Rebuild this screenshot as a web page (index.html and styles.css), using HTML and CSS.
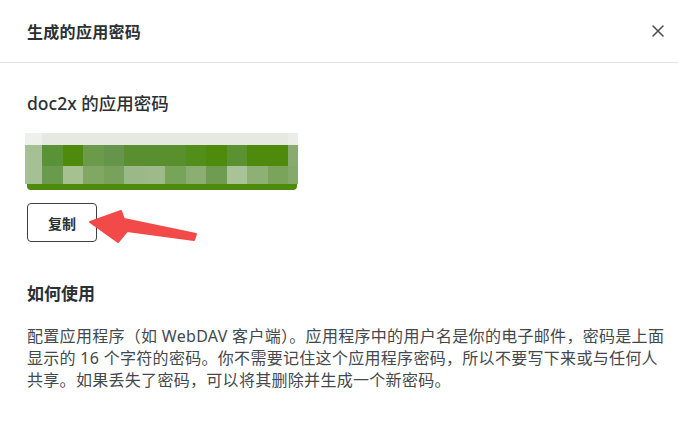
FILE: index.html
```html
<!DOCTYPE html>
<html lang="zh-CN">
<head>
  <meta charset="UTF-8">
  <meta name="viewport" content="width=device-width, initial-scale=1.0">
  <title>生成的应用密码</title>
  <link rel="stylesheet" href="styles.css">
</head>
<body>

<div class="dialog">
  <div class="dialog-header">
    <h1>生成的应用密码</h1>
    <button class="close-btn" aria-label="关闭">
      <svg width="14" height="14" viewBox="0 0 14 14"><path d="M2 2 L12 12 M12 2 L2 12" stroke="#4a4f55" stroke-width="1.6" stroke-linecap="round"/></svg>
    </button>
  </div>

  <div class="dialog-body">
    <h2 class="app-name">doc2x 的应用密码</h2>

    <!-- 密码已打码，只显示色块 -->
    <div class="password-box">
      <div class="mosaic" id="mosaic"></div>
      <div class="password-bar"></div>
    </div>

    <div class="copy-row">
      <button class="copy-btn">复制</button>
      <svg class="pointer" width="112" height="38" viewBox="0 0 112 38">
        <polygon points="2,15 33,4 36,12 108,27 106,33 39,24 30,35" fill="#f24a49" stroke="#f24a49" stroke-width="2" stroke-linejoin="round"/>
      </svg>
    </div>

    <h3 class="section-title">如何使用</h3>
    <p class="help-text">配置应用程序（如 WebDAV 客户端）。应用程序中的用户名是你的电子邮件，密码是上面显示的 16 个字符的密码。你不需要记住这个应用程序密码，所以不要写下来或与任何人共享。如果丢失了密码，可以将其删除并生成一个新密码。</p>
  </div>
</div>

<script>
  // 每行 14 格：首格窄、末格窄
  const rows = [
    ["#eef0ec","#e5e9e2","#e5e9e2","#e5e9e2","#e5e9e2","#e5e9e2","#e5e9e2","#e5e9e2","#e5e9e2","#e5e9e2","#e5e9e2","#e5e9e2","#e5e9e2","#eaede8"],
    ["#a6c096","#5a9236","#4e8a0c","#6a9a4a","#65954a","#5a8f30","#5a8f30","#5a8f2e","#528e1a","#4e8a0c","#5a9232","#4e8a0c","#4e8a0c","#8aab70"],
    ["#a6c096","#6a9a4d","#a6c090","#80a864","#78a25c","#9bb888","#9fba8a","#78a45a","#8cae72","#6e9c50","#a9c398","#8eb075","#7aa45c","#86a96a"]
  ];
  const mosaic = document.getElementById("mosaic");
  rows.forEach(row => {
    row.forEach(color => {
      let cell = document.createElement("span");
      cell.style.background = color;
      mosaic.appendChild(cell);
    });
  });
</script>

</body>
</html>
```

FILE: styles.css
```css
body {
  margin: 0;
  background: #ffffff;
  font-family: "Noto Sans", "Noto Sans CJK SC", sans-serif;
  color: #2b3035;
}
.dialog {
  width: 678px;
  height: 439px;
  background: #fff;
}
.dialog-header {
  height: 62px;
  display: flex;
  align-items: center;
  justify-content: space-between;
  padding: 0 8px 0 27px;
  border-bottom: 1px solid #e2e3e4;
}
.dialog-header h1 {
  margin: 0;
  font-size: 16px;
  font-weight: 700;
  letter-spacing: 0.3px;
  color: #2b3035;
}
.close-btn {
  border: none;
  background: none;
  padding: 4px;
  width: 24px;
  height: 24px;
  display: flex;
  align-items: center;
  justify-content: center;
}
.dialog-body {
  padding: 0 10px 0 27px;
}
.app-name {
  margin: 28px 0 0;
  font-size: 17.5px;
  line-height: 24px;
  font-weight: 500;
  color: #2b3035;
}
.password-box {
  margin-top: 18px;
  width: 273px;
  margin-left: -2px;
}
.mosaic {
  display: grid;
  grid-template-columns: 17px repeat(12, 1fr) 10px;
  grid-template-rows: 12px 21px 18px;
}
.password-bar {
  height: 6px;
  margin: 0 1px 0 2px;
  background: #4e8a0c;
  border-radius: 0 0 4px 4px;
}
.copy-row {
  position: relative;
  margin-top: 13px;
  height: 39px;
}
.copy-btn {
  width: 70px;
  height: 39px;
  border: 1px solid #3c4045;
  border-radius: 4px;
  background: #fff;
  font-family: "Noto Sans", "Noto Sans CJK SC", sans-serif;
  font-size: 14px;
  font-weight: 700;
  color: #2b3035;
  padding: 0;
}
.pointer {
  position: absolute;
  left: 61px;
  top: 4px;
}
.section-title {
  margin: 40px 0 0;
  font-size: 17px;
  line-height: 24px;
  font-weight: 700;
  color: #2b3035;
}
.help-text {
  margin: 19px 0 0;
  font-size: 16px;
  line-height: 22px;
  letter-spacing: 0.3px;
  color: #43484d;
}
```
